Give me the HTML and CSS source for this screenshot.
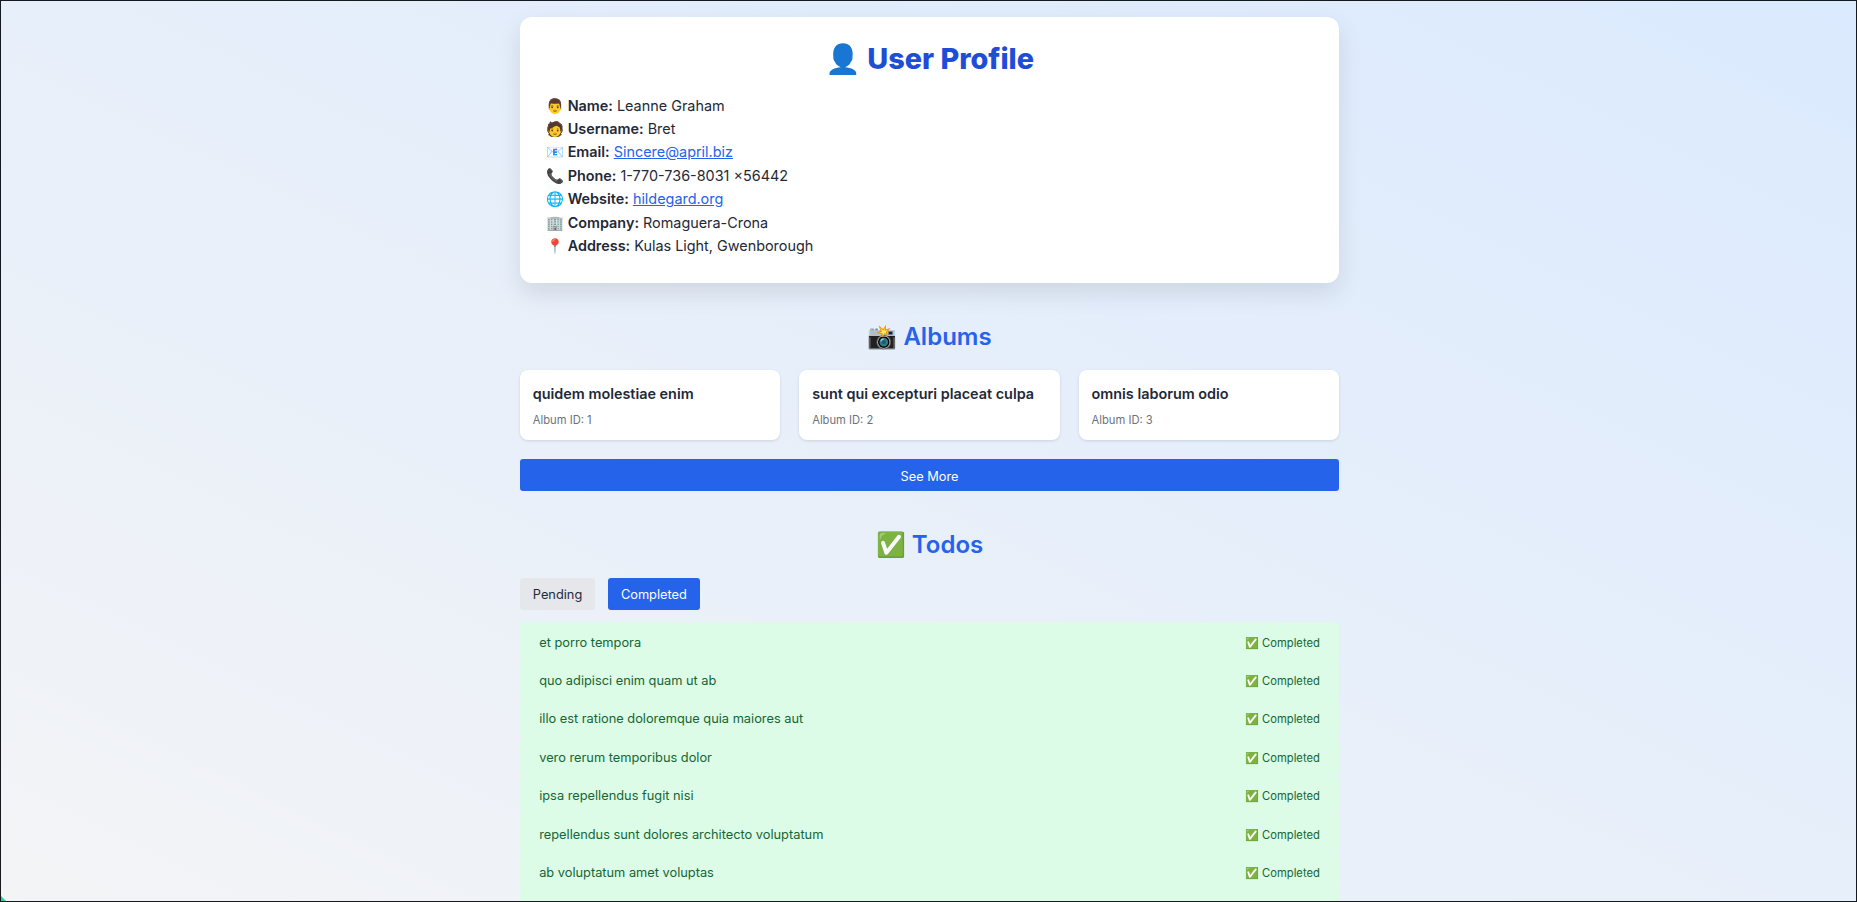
FILE: index.html
```html
<!DOCTYPE html>
<html lang="en">
<head>
<meta charset="utf-8">
<title>User Profile</title>
<link rel="stylesheet" href="styles.css">
</head>
<body>
<main class="page">
  <section class="profile">
    <h1 class="profile-title">👤 User Profile</h1>
    <ul class="profile-list">
      <li>👨 <b>Name:</b> Leanne Graham</li>
      <li>🧑 <b>Username:</b> Bret</li>
      <li>📧 <b>Email:</b> <a href="#">Sincere@april.biz</a></li>
      <li>📞 <b>Phone:</b> 1-770-736-8031 x56442</li>
      <li>🌐 <b>Website:</b> <a href="#">hildegard.org</a></li>
      <li>🏢 <b>Company:</b> Romaguera-Crona</li>
      <li>📍 <b>Address:</b> Kulas Light, Gwenborough</li>
    </ul>
  </section>

  <h2 class="section-title">📸 Albums</h2>
  <div class="albums">
    <article class="album"><h3>quidem molestiae enim</h3><p>Album ID: 1</p></article>
    <article class="album"><h3>sunt qui excepturi placeat culpa</h3><p>Album ID: 2</p></article>
    <article class="album"><h3>omnis laborum odio</h3><p>Album ID: 3</p></article>
  </div>
  <button class="btn btn-wide">See More</button>

  <h2 class="section-title">✅ Todos</h2>
  <div class="tabs">
    <button class="btn btn-muted">Pending</button>
    <button class="btn">Completed</button>
  </div>
  <ul class="todos">
    <li><span>et porro tempora</span><small>✅ Completed</small></li>
    <li><span>quo adipisci enim quam ut ab</span><small>✅ Completed</small></li>
    <li><span>illo est ratione doloremque quia maiores aut</span><small>✅ Completed</small></li>
    <li><span>vero rerum temporibus dolor</span><small>✅ Completed</small></li>
    <li><span>ipsa repellendus fugit nisi</span><small>✅ Completed</small></li>
    <li><span>repellendus sunt dolores architecto voluptatum</span><small>✅ Completed</small></li>
    <li><span>ab voluptatum amet voluptas</span><small>✅ Completed</small></li>
    <li></li>
  </ul>
</main>
<div class="frame"></div>
</body>
</html>
```

FILE: styles.css
```css
* { box-sizing: border-box; }
html, body { margin: 0; height: 100%; overflow: hidden; }
body {
  font-family: Inter, "Noto Sans", sans-serif;
  color: #1f2937;
  background: linear-gradient(to top right, #f3f4f6, #dbeafe);
  padding: 17px 0 0 2px;
}
.frame {
  position: fixed;
  inset: 0;
  border: 1px solid #14181f;
  pointer-events: none;
}
.frame::after {
  content: "";
  position: absolute;
  left: 0;
  bottom: 0;
  width: 5px;
  height: 5px;
  background: #1fd6a4;
  clip-path: polygon(0 0, 100% 100%, 0 100%);
}
.page { width: 819px; margin: 0 auto; }
.profile {
  background: #fff;
  border-radius: 12px;
  box-shadow: 0 10px 25px rgba(0,0,0,.1);
  padding: 24.6px 25.6px 0;
  height: 266px;
}
.profile-title {
  margin: 0 0 18px;
  text-align: center;
  font-size: 28.8px;
  line-height: 34px;
  font-weight: 800;
  color: #1d4ed8;
}
.profile-list { list-style: none; margin: 0; padding: 0; font-size: 14.4px; line-height: 23.4px; }
.profile-list b { font-weight: 600; }
.profile-list a { color: #2563eb; }
.section-title {
  margin: 38px 0 17px;
  text-align: center;
  font-size: 24px;
  line-height: 32px;
  font-weight: 600;
  color: #2563eb;
}
.albums { display: grid; grid-template-columns: repeat(3, 1fr); gap: 19.2px; }
.album {
  background: #fff;
  border-radius: 8px;
  box-shadow: 0 1px 3px rgba(0,0,0,.12);
  padding: 14px 12.8px 0;
  height: 70px;
}
.album h3 { margin: 0 0 8px; font-size: 14.4px; line-height: 20px; font-weight: 600; }
.album p { margin: 0; font-size: 11.2px; line-height: 16px; color: #6b7280; }
.btn {
  height: 32px;
  padding: 0 12.8px;
  border: 0;
  border-radius: 3px;
  background: #2563eb;
  color: #fff;
  font: 400 12.8px Inter, sans-serif;
}
.btn-wide { display: block; width: 100%; margin-top: 19px; padding-top: 2px; }
.btn-muted { background: #e5e7eb; color: #1f2937; }
.tabs { display: flex; gap: 13px; margin-bottom: 12px; }
.todos { list-style: none; margin: 0; padding: 0; }
.todos li {
  display: flex;
  justify-content: space-between;
  align-items: center;
  height: 38.4px;
  padding: 2px 19.2px 0;
  background: #dcfce7;
  border-radius: 4px;
  color: #166534;
  font-size: 12.8px;
}
.todos small { font-size: 11.2px; margin-top: 1px; }
```
